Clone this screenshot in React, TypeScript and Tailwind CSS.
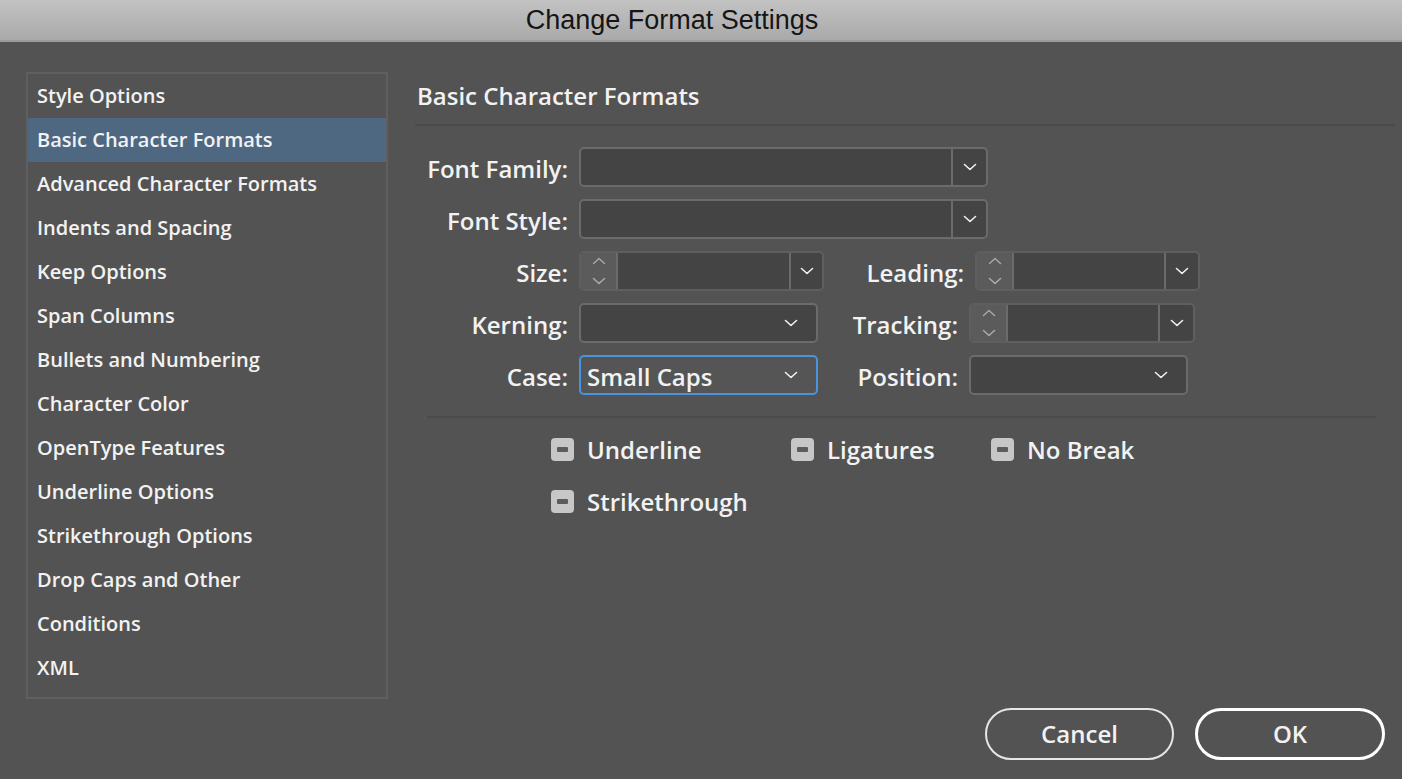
// Diálogo "Change Format Settings" — panel lateral de categorías + formulario de formatos básicos
import React from 'react'

const categories = [
  'Style Options',
  'Basic Character Formats',
  'Advanced Character Formats',
  'Indents and Spacing',
  'Keep Options',
  'Span Columns',
  'Bullets and Numbering',
  'Character Color',
  'OpenType Features',
  'Underline Options',
  'Strikethrough Options',
  'Drop Caps and Other',
  'Conditions',
  'XML',
]

function Chevron({ className = 'text-[#f0f0f0]' }: { className?: string }) {
  return (
    <svg width="14" height="8" viewBox="0 0 14 8" className={className} fill="none">
      <polyline points="1.5,1.5 7,6.5 12.5,1.5" stroke="currentColor" strokeWidth="1.6" strokeLinecap="round" strokeLinejoin="round" />
    </svg>
  )
}

function ChevronUp() {
  return (
    <svg width="14" height="8" viewBox="0 0 14 8" className="text-[#a9a9a9]" fill="none">
      <polyline points="1.5,6.5 7,1.5 12.5,6.5" stroke="currentColor" strokeWidth="1.4" strokeLinecap="round" strokeLinejoin="round" />
    </svg>
  )
}

// Combo con separador: campo + botón de flecha
function Combo({ width, button = 37 }: { width: number; button?: number }) {
  return (
    <div
      className="flex h-[40px] rounded-[5px] border-2 border-[#6b6b6b] bg-[#444444] overflow-hidden"
      style={{ width }}
    >
      <div className="flex-1" />
      <div className="flex items-center justify-center border-l-2 border-[#6b6b6b]" style={{ width: button - 2 }}>
        <Chevron />
      </div>
    </div>
  )
}

// Campo numérico con flechitas a la izquierda
function Spinner({ width, input, button }: { width: number; input: number; button: number }) {
  return (
    <div
      className="flex h-[40px] rounded-[5px] border-2 border-[#5f5f5f] bg-[#444444] overflow-hidden"
      style={{ width }}
    >
      <div className="flex w-[35px] flex-col items-center justify-center gap-[12px] bg-[#5b5b5b]">
        <ChevronUp />
        <Chevron className="text-[#a9a9a9]" />
      </div>
      <div className="border-l-2 border-[#6b6b6b]" style={{ width: input }} />
      <div className="flex flex-1 items-center justify-center border-l-2 border-[#6b6b6b]" style={{ minWidth: button }}>
        <Chevron />
      </div>
    </div>
  )
}

// Desplegable simple, sin separador
function Select({ width, value, focused }: { width: number; value?: string; focused?: boolean }) {
  return (
    <div
      className={
        focused
          ? 'flex h-[40px] items-center rounded-[5px] border-2 border-[#4a93de] bg-[#555555] pl-[6px] pr-[18px]'
          : 'flex h-[40px] items-center rounded-[5px] border-2 border-[#6b6b6b] bg-[#444444] pl-[6px] pr-[18px]'
      }
      style={{ width }}
    >
      <span className="flex-1 pt-[4px] text-[24px] leading-none text-[#f2f2f2]">{value}</span>
      <Chevron />
    </div>
  )
}

function Label({ children }: { children: React.ReactNode }) {
  return <div className="w-[164px] shrink-0 pr-[11px] pt-[4px] text-right text-[24px] leading-none">{children}</div>
}

function RightLabel({ children }: { children: React.ReactNode }) {
  return <div className="ml-[20px] w-[131px] shrink-0 pr-[11px] pt-[4px] text-right text-[24px] leading-none">{children}</div>
}

function Check({ label, width }: { label: string; width?: number }) {
  return (
    <div className="flex h-[40px] items-center" style={{ width }}>
      <div className="flex h-[23px] w-[23px] items-center justify-center rounded-[4px] bg-[#c7c7c7]">
        <div className="h-[5px] w-[11px] rounded-[1px] bg-[#5c5c5c]" />
      </div>
      <span className="ml-[13px] pt-[2px] text-[24px] leading-none">{label}</span>
    </div>
  )
}

export default function App() {
  return (
    <div className="flex h-[779px] w-[1402px] flex-col overflow-hidden bg-[#535353] font-['Open_Sans','Noto_Sans',sans-serif] font-semibold text-[#f2f2f2]">
      {/* Barra de título */}
      <header className="flex h-[42px] shrink-0 items-center justify-center border-b-2 border-[#9c9b9c] bg-gradient-to-b from-[#c4c3c4] to-[#aaa9aa] pr-[58px]">
        <span className="font-['Liberation_Sans',Arial,sans-serif] text-[27px] font-normal leading-none text-[#151515]">
          Change Format Settings
        </span>
      </header>

      <div className="flex pl-[26px] pt-[30px]">
        {/* Lista de categorías */}
        <aside className="h-[627px] w-[362px] shrink-0 border-2 border-[#5f5f5f]">
          {categories.map((c) => (
            <div
              key={c}
              className={
                c === 'Basic Character Formats'
                  ? 'flex h-[44px] items-center bg-[#4f6882] px-[9px] text-[20px]'
                  : 'flex h-[44px] items-center px-[9px] text-[20px]'
              }
            >
              {c}
            </div>
          ))}
        </aside>

        {/* Formulario */}
        <main className="ml-[27px] flex-1 pr-[7px]">
          <div className="flex h-[48px] items-center pl-[2px] text-[24px] leading-none">Basic Character Formats</div>
          <div className="mt-[4px] h-[2px] bg-[#4a4a4a]" />

          <div className="mt-[21px] flex flex-col gap-[12px]">
            <div className="flex h-[40px] items-center">
              <Label>Font Family:</Label>
              <Combo width={409} />
            </div>
            <div className="flex h-[40px] items-center">
              <Label>Font Style:</Label>
              <Combo width={409} />
            </div>
            <div className="flex h-[40px] items-center">
              <Label>Size:</Label>
              <Spinner width={245} input={173} button={33} />
              <RightLabel>Leading:</RightLabel>
              <Spinner width={225} input={152} button={34} />
            </div>
            <div className="flex h-[40px] items-center">
              <Label>Kerning:</Label>
              <Select width={239} />
              <RightLabel>Tracking:</RightLabel>
              <Spinner width={226} input={152} button={35} />
            </div>
            <div className="flex h-[40px] items-center">
              <Label>Case:</Label>
              <Select width={239} value="Small Caps" focused />
              <RightLabel>Position:</RightLabel>
              <Select width={219} />
            </div>
          </div>

          <div className="ml-[12px] mr-[19px] mt-[21px] h-[2px] bg-[#4a4a4a]" />

          <div className="mt-[11px] flex flex-col gap-[12px] pl-[136px]">
            <div className="flex">
              <Check label="Underline" width={240} />
              <Check label="Ligatures" width={200} />
              <Check label="No Break" />
            </div>
            <Check label="Strikethrough" />
          </div>
        </main>
      </div>

      {/* Botones */}
      <div className="mt-[9px] flex justify-end gap-[21px] pr-[17px]">
        <button className="flex h-[52px] w-[189px] items-center justify-center rounded-full border-2 border-[#e6e6e6] text-[24px] leading-none">
          Cancel
        </button>
        <button className="flex h-[52px] w-[190px] items-center justify-center rounded-full border-[3px] border-white text-[24px] leading-none">
          OK
        </button>
      </div>
    </div>
  )
}
